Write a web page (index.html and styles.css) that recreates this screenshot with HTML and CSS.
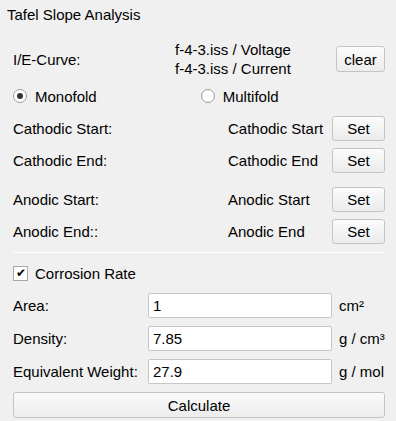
FILE: index.html
```html
<!DOCTYPE html>
<html lang="en">
<head>
  <title>Tafel Slope Analysis</title>
  <meta charset="utf-8">
  <link rel="stylesheet" href="styles.css">
</head>
<body>
  <div id="panel">
    <div class="title">Tafel Slope Analysis</div>

    <div class="curve-row">
      <span class="lbl">I/E-Curve:</span>
      <div class="files">
        <div>f-4-3.iss / Voltage</div>
        <div>f-4-3.iss / Current</div>
      </div>
      <button class="btn clear">clear</button>
    </div>

    <div class="radio-row">
      <label class="radio"><span class="dot on"></span>Monofold</label>
      <label class="radio multi"><span class="dot"></span>Multifold</label>
    </div>

    <div class="set-row">
      <span class="lbl">Cathodic Start:</span>
      <span class="val">Cathodic Start</span>
      <button class="btn set">Set</button>
    </div>
    <div class="set-row">
      <span class="lbl">Cathodic End:</span>
      <span class="val">Cathodic End</span>
      <button class="btn set">Set</button>
    </div>
    <div class="set-row anodic">
      <span class="lbl">Anodic Start:</span>
      <span class="val">Anodic Start</span>
      <button class="btn set">Set</button>
    </div>
    <div class="set-row">
      <span class="lbl">Anodic End::</span>
      <span class="val">Anodic End</span>
      <button class="btn set">Set</button>
    </div>

    <div class="sep"></div>

    <label class="check-row"><span class="box">&#10004;</span>Corrosion Rate</label>

    <div class="field-row">
      <span class="lbl">Area:</span>
      <input type="text" value="1">
      <span class="unit">cm²</span>
    </div>
    <div class="field-row">
      <span class="lbl">Density:</span>
      <input type="text" value="7.85">
      <span class="unit">g / cm³</span>
    </div>
    <div class="field-row">
      <span class="lbl">Equivalent Weight:</span>
      <input type="text" value="27.9">
      <span class="unit">g / mol</span>
    </div>

    <button class="btn calc">Calculate</button>
  </div>
</body>
</html>
```

FILE: styles.css
```css
body {
  margin: 0;
  background-color: #f0f0f0;
  font-family: "Liberation Sans", Arial, sans-serif;
  font-size: 15px;
  color: #000;
}
#panel {
  width: 396px;
  height: 421px;
  padding: 6px 11px 0 13px;
  box-sizing: border-box;
}
.title {
  margin-left: -6px;
  height: 18px;
  line-height: 18px;
}

.btn {
  font-family: inherit;
  font-size: 15px;
  color: #000;
  background: linear-gradient(#fbfbfb, #ececec);
  border: 1px solid #c4c4c4;
  border-radius: 3px;
  padding: 0;
}

.curve-row {
  display: flex;
  align-items: center;
  margin-top: 22px;
  height: 26px;
}
.curve-row .lbl {
  width: 162px;
}
.files {
  width: 161px;
  line-height: 19px;
}
.clear {
  width: 49px;
  height: 26px;
}

.radio-row {
  display: flex;
  align-items: center;
  margin-top: 14px;
  height: 20px;
}
.radio {
  display: flex;
  align-items: center;
}
.multi {
  margin-left: 104px;
}
.dot {
  width: 12px;
  height: 12px;
  border: 1px solid #9a9a9a;
  border-radius: 50%;
  background: #fff;
  margin: 0 8px 0 0;
  position: relative;
}
.dot.on::after {  /* filled centre of the picked radio */
  content: "";
  position: absolute;
  left: 3px;
  top: 3px;
  width: 6px;
  height: 6px;
  border-radius: 50%;
  background: #333;
}

.set-row {
  display: grid;
  grid-template-columns: 215px 104px 53px;
  align-items: center;
  height: 25px;
  margin-top: 7px;
}
.radio-row + .set-row {
  margin-top: 10px;
}
.set-row.anodic {
  margin-top: 14px;
}
.set {
  height: 25px;
}

.sep {
  height: 1px;
  background: #fff;
  margin: 8px 0 0 0;
}

.check-row {
  display: flex;
  align-items: center;
  margin-top: 12px;
  height: 16px;
}
.box {
  width: 13px;
  height: 13px;
  border: 1px solid #a8a8a8;
  background: #fff;
  font-size: 12px;
  line-height: 13px;
  text-align: center;
  margin-right: 7px;
}

.field-row {
  display: flex;
  align-items: center;
  height: 25px;
  margin-top: 8px;
}
.check-row + .field-row {
  margin-top: 12px;
}
.field-row .lbl {
  width: 135px;
}
.field-row input {
  width: 184px;
  height: 25px;
  box-sizing: border-box;
  border: 1px solid #c6c6c6;
  border-radius: 2px;
  background: #fff;
  font-family: inherit;
  font-size: 15px;
  padding: 0 4px;
  margin: 0 7px 0 0;
}

.calc {
  display: block;
  width: 372px;
  height: 26px;
  margin-top: 8px;
}
```
